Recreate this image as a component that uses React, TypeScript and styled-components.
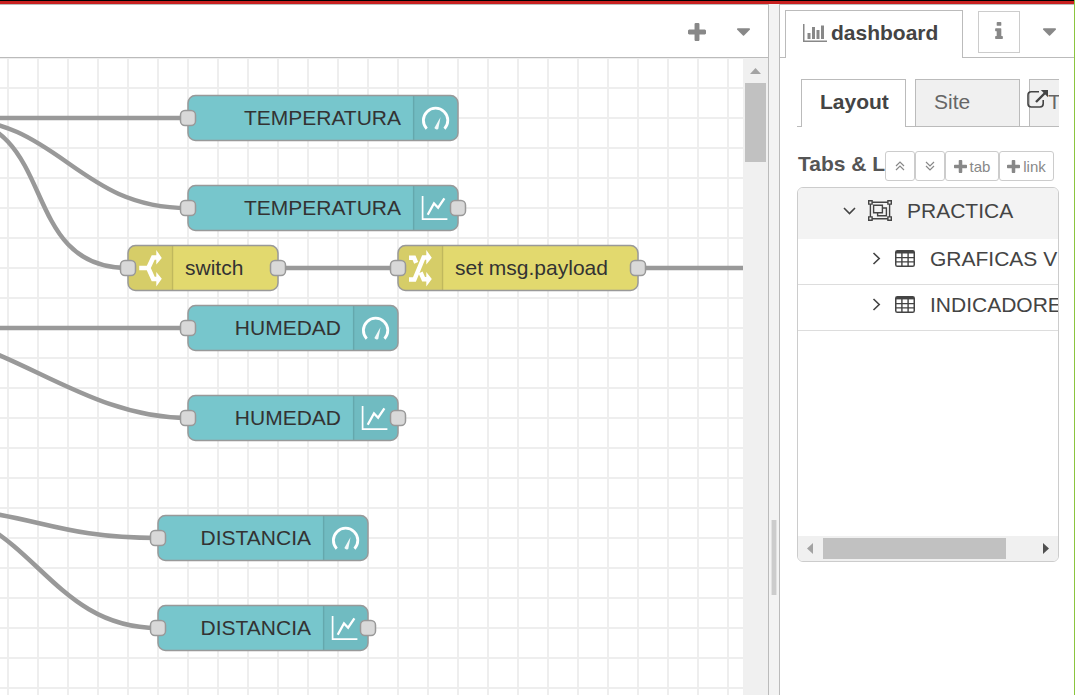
import React from 'react';
import styled, { createGlobalStyle } from 'styled-components';

const Global = createGlobalStyle`
  * { box-sizing: border-box; }
  body { margin: 0; overflow: hidden; background: #fff; }
`;

const Page = styled.div`
  width: 1075px;
  height: 695px;
  display: flex;
  flex-direction: column;
  border-right: 1px solid #8bc53f;
  font-family: 'Liberation Sans', Arial, sans-serif;
  font-size: 21px;
  color: #444;
  background: #fff;
`;
const TopBar = styled.div`
  height: 4px;
  flex: none;
  background: #c8201f;
  border-top: 1px solid #000;
`;
const Main = styled.div`
  flex: 1;
  display: flex;
  min-height: 0;
`;
const Workspace = styled.section`
  width: 769px;
  flex: none;
  display: flex;
  flex-direction: column;
  border-top: 1px solid #bbb;
  border-right: 1px solid #bbb;
`;
const WorkspaceTabs = styled.header`
  height: 53px;
  flex: none;
  display: flex;
  align-items: center;
  justify-content: flex-end;
  gap: 31px;
  padding: 2px 18px 0 0;
  border-bottom: 1px solid #bbb;
`;
const ChartRow = styled.div`
  flex: 1;
  display: flex;
  min-height: 0;
`;
const Canvas = styled.div`
  position: relative;
  width: 743px;
  flex: none;
  overflow: hidden;
  background-image: linear-gradient(#eee 2px, transparent 2px),
    linear-gradient(90deg, #eee 2px, transparent 2px);
  background-size: 30px 30px;
  background-position: 7px 29px;
`;
const Wires = styled.svg`
  position: absolute;
  left: 0;
  top: 0;
`;
const NodeBox = styled.div<{ $x: number; $y: number; $w: number; $side: 'left' | 'right' }>`
  position: absolute;
  left: ${(p) => p.$x}px;
  top: ${(p) => p.$y}px;
  width: ${(p) => p.$w}px;
  height: 46px;
  display: flex;
  align-items: center;
  justify-content: ${(p) => (p.$side === 'left' ? 'flex-start' : 'flex-end')};
  padding: ${(p) => (p.$side === 'left' ? '0 0 0 57px' : '0 57px 0 0')};
  color: #333;
`;
const NodeArt = styled.svg`
  position: absolute;
  left: 0;
  top: 0;
  overflow: visible;
`;
const NodeLabel = styled.span`
  position: relative;
  line-height: 24px;
  white-space: nowrap;
`;
const VScroll = styled.div`
  flex: 1;
  display: flex;
  flex-direction: column;
  align-items: center;
  padding-top: 10px;
  background: #f0f0f0;
`;
const VThumb = styled.div`
  width: 21px;
  height: 79px;
  margin-top: 9px;
  background: #c1c1c1;
`;
const Arrow = styled.svg`
  display: block;
  flex: none;
`;
const Splitter = styled.div`
  width: 10px;
  flex: none;
  display: flex;
  justify-content: center;
  align-items: flex-start;
  padding-top: 516px;
  background: #f3f3f3;
`;
const Grip = styled.div`
  width: 6px;
  height: 75px;
  background: #ccc;
  border: solid #e2e2e2;
  border-width: 0 1px;
`;
const Sidebar = styled.aside`
  flex: 1;
  min-width: 0;
  display: flex;
  flex-direction: column;
  border-top: 1px solid #bbb;
  border-left: 1px solid #bbb;
`;
const SidebarTabs = styled.header`
  height: 53px;
  flex: none;
  display: flex;
  align-items: flex-start;
  padding: 5px 0 0 5px;
  background: linear-gradient(#bbb, #bbb) 0 52px / 100% 1px no-repeat;
`;
const ActiveTab = styled.div`
  width: 178px;
  height: 48px;
  display: flex;
  align-items: center;
  gap: 4px;
  padding: 0 0 4px 17px;
  border: 1px solid #bbb;
  border-bottom: 0;
  background: #fff;
  font-weight: bold;
`;
const InfoButton = styled.div`
  width: 42px;
  height: 42px;
  margin: 1px 0 0 15px;
  display: flex;
  align-items: center;
  justify-content: center;
  padding-bottom: 3px;
  border: 1px solid #ccc;
`;
const MenuCaret = styled.div`
  margin: 18px 0 0 23px;
`;
const Body = styled.div`
  padding: 21px 15px 0 17px;
  display: flex;
  flex-direction: column;
`;
const SubTabs = styled.nav`
  position: relative;
  width: 262px;
  height: 48px;
  display: flex;
  gap: 9px;
  padding-left: 4px;
  overflow: hidden;
  background: linear-gradient(#bbb, #bbb) 0 47px / 100% 1px no-repeat;
`;
const SubTab = styled.div<{ $active?: boolean }>`
  width: 105px;
  height: 48px;
  flex: none;
  padding: 10px 0 0 18px;
  line-height: 24px;
  border: 1px solid #bbb;
  border-bottom: ${(p) => (p.$active ? '0' : '1px solid #bbb')};
  background: ${(p) => (p.$active ? '#fff' : '#f0f0f0')};
  color: ${(p) => (p.$active ? '#444' : '#666')};
  font-weight: ${(p) => (p.$active ? 'bold' : 'normal')};
`;
const OpenLink = styled.svg`
  position: absolute;
  left: 230px;
  top: 10px;
`;
const TitleRow = styled.div`
  height: 30px;
  margin-top: 24px;
  display: flex;
`;
const Title = styled.div`
  width: 88px;
  padding-left: 1px;
  overflow: hidden;
  white-space: nowrap;
  font-weight: bold;
  line-height: 26px;
  color: #555;
`;
const SmallButton = styled.button<{ $w: number }>`
  width: ${(p) => p.$w}px;
  height: 30px;
  flex: none;
  display: flex;
  align-items: center;
  justify-content: center;
  gap: 3px;
  padding: 0;
  border: 1px solid #ccc;
  border-radius: 3px;
  background: #fff;
  color: #888;
  font: 15px 'Liberation Sans', Arial, sans-serif;
`;
const Tree = styled.div`
  width: 262px;
  height: 375px;
  margin-top: 6px;
  display: flex;
  flex-direction: column;
  border: 1px solid #ccc;
  border-radius: 6px;
  overflow: hidden;
`;
const TreeRow = styled.div<{ $group?: boolean }>`
  height: ${(p) => (p.$group ? 51 : 46)}px;
  flex: none;
  display: flex;
  align-items: center;
  padding: ${(p) => (p.$group ? '0 0 6px 44px' : '0 0 6px 71px')};
  background: ${(p) => (p.$group ? '#f3f3f3' : '#fff')};
  border-bottom: ${(p) => (p.$group ? '0' : '1px solid #ddd')};
  white-space: nowrap;
`;
const TreeIcon = styled.svg<{ $l: number; $r: number }>`
  flex: none;
  margin: 0 ${(p) => p.$r}px 0 ${(p) => p.$l}px;
`;
const HScroll = styled.div`
  height: 25px;
  margin-top: auto;
  display: flex;
  align-items: center;
  padding: 0 9px;
  background: #f0f0f0;
`;
const HThumb = styled.div`
  width: 183px;
  height: 21px;
  flex: none;
  margin: 0 37px 0 10px;
  background: #c1c1c1;
`;

const paths = {
  plus: 'M1600 736v192q0 40-28 68t-68 28h-416v416q0 40-28 68t-68 28h-192q-40 0-68-28t-28-68v-416h-416q-40 0-68-28t-28-68v-192q0-40 28-68t68-28h416v-416q0-40 28-68t68-28h192q40 0 68 28t28 68v416h416q40 0 68 28t28 68z',
  caret: 'M1408 704q0 26-19 45l-448 448q-19 19-45 19t-45-19l-448-448q-19-19-19-45t19-45 45-19h896q26 0 45 19t19 45z',
  info: 'M1216 1344v128q0 26-19 45t-45 19h-512q-26 0-45-19t-19-45v-128q0-26 19-45t45-19h64v-384h-64q-26 0-45-19t-19-45v-128q0-26 19-45t45-19h384q26 0 45 19t19 45v576h64q26 0 45 19t19 45zm-128-1152v192q0 26-19 45t-45 19h-256q-26 0-45-19t-19-45v-192q0-26 19-45t45-19h256q26 0 45 19t19 45z',
  chart: 'M640 896v512h-256v-512h256zm384-512v1024h-256v-1024h256zm1024 1152v128h-2048v-1536h128v1408h1920zm-640-896v768h-256v-768h256zm384-384v1152h-256v-1152h256z',
};

interface GlyphProps {
  name: keyof typeof paths;
  w: number;
  h: number;
  viewBox: string;
}

const Glyph = ({ name, w, h, viewBox }: GlyphProps) => (
  <Arrow width={w} height={h} viewBox={viewBox} fill="#888">
    <path d={paths[name]} />
  </Arrow>
);

const PlusIcon = ({ size }: { size: number }) => <Glyph name="plus" w={size} h={size} viewBox="192 128 1408 1408" />;
const CaretIcon = () => <Glyph name="caret" w={13} h={8} viewBox="384 640 1024 576" />;

type IconName = 'gauge' | 'chart' | 'switch' | 'change';

const NodeIcon = ({ name }: { name: IconName }) => {
  switch (name) {
    case 'gauge':
      return (
        <g>
          <path d="M13.3 33.2A12.2 12.2 0 1 1 31.1 33.2" fill="none" stroke="#fff" strokeWidth="2.8" />
          <path d="M27.2 21.6L24.9 33.2Q22.8 35.2 21 32.6Z" fill="#fff" fillOpacity=".9" />
        </g>
      );
    case 'chart':
      return (
        <g fill="none" stroke="#fff">
          <path d="M9.2 10.5V33.7H34" strokeWidth="1.7" />
          <path d="M14.3 29.2L20.6 18L24.7 22.2L31 12.9" strokeWidth="2.3" />
        </g>
      );
    case 'switch':
      return (
        <g>
          <path d="M11.2 22.5H20.5M19.6 24L25.2 12H29M19.6 21L25.2 33.5H29" fill="none" stroke="#fff" strokeWidth="4.6" />
          <path d="M28.3 4.5L33.8 12.4L28.3 19ZM28.3 26.5L33.8 33.2L28.3 41Z" fill="#fff" />
        </g>
      );
    default:
      return (
        <g>
          <path d="M11 34H16.4L25.6 12H29M11 12.2H16L18.2 17.4M22.6 27L25.6 33.8H29" fill="none" stroke="#fff" strokeWidth="4.4" />
          <path d="M28.3 4.5L33.8 12.2L28.3 19ZM28.3 26.5L33.8 33.6L28.3 41Z" fill="#fff" />
        </g>
      );
  }
};

interface FlowNodeProps {
  x: number;
  cy: number;
  w: number;
  label: string;
  icon: IconName;
  out?: boolean;
}

const Port = ({ x }: { x: number }) => (
  <rect x={x - 7.5} y={15.5} width={15} height={15} rx={4.5} fill="#d9d9d9" stroke="#999" strokeWidth={1.5} />
);

const FlowNode = ({ x, cy, w, label, icon, out }: FlowNodeProps) => {
  const left = icon === 'switch' || icon === 'change';
  const ix = left ? 0 : w - 45;
  return (
    <NodeBox $x={x} $y={cy - 58 - 23} $w={w} $side={left ? 'left' : 'right'}>
      <NodeArt width={w} height={46}>
        <rect x={0} y={0.5} width={w} height={45} rx={7.5} fill={left ? '#e2d96e' : '#77c6cc'} />
        <path
          d={
            left
              ? 'M45 .5H7.5A7.5 7.5 0 0 0 0 8V38A7.5 7.5 0 0 0 7.5 45.5H45Z'
              : `M${ix} .5H${w - 7.5}A7.5 7.5 0 0 1 ${w} 8V38A7.5 7.5 0 0 1 ${w - 7.5} 45.5H${ix}Z`
          }
          fill="#000"
          fillOpacity={0.05}
        />
        <path d={`M${left ? 44.6 : ix + 0.6} .5V45.5`} stroke="#000" strokeOpacity={0.1} strokeWidth={1.5} />
        <g transform={`translate(${ix + (left ? 0 : 0.4)} .5)`}>
          <NodeIcon name={icon} />
        </g>
        <rect x={0} y={0.5} width={w} height={45} rx={7.5} fill="none" stroke="#999" strokeWidth={1.5} />
        <Port x={0} />
        {out && <Port x={w} />}
      </NodeArt>
      <NodeLabel>{label}</NodeLabel>
    </NodeBox>
  );
};

const nodes: FlowNodeProps[] = [
  { x: 188, cy: 118, w: 270, label: 'TEMPERATURA', icon: 'gauge' },
  { x: 188, cy: 208, w: 270, label: 'TEMPERATURA', icon: 'chart', out: true },
  { x: 128, cy: 268, w: 150, label: 'switch', icon: 'switch', out: true },
  { x: 398, cy: 268, w: 240, label: 'set msg.payload', icon: 'change', out: true },
  { x: 188, cy: 328, w: 210, label: 'HUMEDAD', icon: 'gauge' },
  { x: 188, cy: 418, w: 210, label: 'HUMEDAD', icon: 'chart', out: true },
  { x: 158, cy: 538, w: 210, label: 'DISTANCIA', icon: 'gauge' },
  { x: 158, cy: 628, w: 210, label: 'DISTANCIA', icon: 'chart', out: true },
];

const wires: [number, number, number, number][] = [
  [-52, 118, 188, 118],
  [-52, 118, 188, 208],
  [-52, 118, 128, 268],
  [278, 268, 398, 268],
  [638, 268, 900, 268],
  [-112, 328, 188, 328],
  [-112, 328, 188, 418],
  [-82, 508, 158, 538],
  [-82, 508, 158, 628],
];

const TableIcon = () => (
  <TreeIcon $l={14} $r={15} width="20" height="17" viewBox="0 0 20 17">
    <rect x=".75" y=".75" width="18.5" height="15.5" rx="1.6" fill="none" stroke="#444" strokeWidth="1.5" />
    <path d="M1 2.2H19" stroke="#444" strokeWidth="2.4" />
    <path d="M1 7.6H19M1 11.9H19M6.9 3V16M13.1 3V16" stroke="#444" strokeWidth="1.4" />
  </TreeIcon>
);

const GroupIcon = () => (
  <TreeIcon $l={12} $r={15} width="24" height="21" viewBox="0 0 24 21" fill="none" stroke="#444" strokeWidth="1.4">
    <path d="M4 2.2H20M4 18.8H20M2.4 4V17M21.6 4V17" />
    <path d="M.7 .7H4.1V4.1H.7ZM19.9 .7H23.3V4.1H19.9ZM.7 16.9H4.1V20.3H.7ZM19.9 16.9H23.3V20.3H19.9Z" />
    <path d="M5.6 5.2H14.4V12.8H5.6ZM14.4 8H18.4V15.8H9.6V12.8" />
  </TreeIcon>
);

const Chevron = ({ down }: { down?: boolean }) => (
  <TreeIcon $l={down ? 1 : 3} $r={0} width={down ? 13 : 9} height="13" fill="none" stroke="#444" strokeWidth="1.6">
    <path d={down ? 'M1 4L6.5 9.5L12 4' : 'M1.5 1L7.2 6.5L1.5 12'} />
  </TreeIcon>
);

const DoubleAngle = ({ d }: { d: string }) => (
  <svg width="10" height="10" viewBox="0 0 10 10" fill="none" stroke="#888" strokeWidth="1.2">
    <path d={d} />
  </svg>
);

export default function App() {
  return (
    <Page>
      <Global />
      <TopBar />
      <Main>
        <Workspace>
          <WorkspaceTabs>
            <PlusIcon size={18} />
            <CaretIcon />
          </WorkspaceTabs>
          <ChartRow>
            <Canvas>
              <Wires width="743" height="637" viewBox="0 58 743 637" fill="none" stroke="#999" strokeWidth="4.5">
                {wires.map(([x1, y1, x2, y2], i) => (
                  <path key={i} d={`M${x1} ${y1}C${x1 + 112.5} ${y1} ${x2 - 112.5} ${y2} ${x2} ${y2}`} />
                ))}
              </Wires>
              {nodes.map((n) => (
                <FlowNode key={`${n.x}-${n.cy}`} {...n} />
              ))}
            </Canvas>
            <VScroll>
              <Arrow width="11" height="6" viewBox="0 0 11 6" fill="#a3a3a3">
                <path d="M0 6L5.5 0L11 6Z" />
              </Arrow>
              <VThumb />
            </VScroll>
          </ChartRow>
        </Workspace>
        <Splitter>
          <Grip />
        </Splitter>
        <Sidebar>
          <SidebarTabs>
            <ActiveTab>
              <Glyph name="chart" w={24} h={18} viewBox="0 128 2048 1536" />
              dashboard
            </ActiveTab>
            <InfoButton>
              <Glyph name="info" w={8} h={17} viewBox="576 128 640 1408" />
            </InfoButton>
            <MenuCaret>
              <CaretIcon />
            </MenuCaret>
          </SidebarTabs>
          <Body>
            <SubTabs>
              <SubTab $active>Layout</SubTab>
              <SubTab>Site</SubTab>
              <SubTab>Theme</SubTab>
              <OpenLink width="22" height="20" viewBox="0 0 22 20" fill="none" stroke="#444" strokeWidth="1.6">
                <path d="M12 2.8H4.2A3.2 3.2 0 0 0 1 6V14.8A3.2 3.2 0 0 0 4.2 18H13A3.2 3.2 0 0 0 16.2 14.8V11" />
                <path d="M9 13L18 4" strokeWidth="2.4" />
                <path d="M13.8 1H21V8.2Z" fill="#444" stroke="none" />
              </OpenLink>
            </SubTabs>
            <TitleRow>
              <Title>Tabs &amp; Links</Title>
              <SmallButton $w={30}>
                <DoubleAngle d="M1 5L5 1L9 5M1 9L5 5L9 9" />
              </SmallButton>
              <SmallButton $w={30}>
                <DoubleAngle d="M1 1L5 5L9 1M1 5L5 9L9 5" />
              </SmallButton>
              <SmallButton $w={54}>
                <PlusIcon size={13} />
                tab
              </SmallButton>
              <SmallButton $w={55}>
                <PlusIcon size={13} />
                link
              </SmallButton>
            </TitleRow>
            <Tree>
              <TreeRow $group>
                <Chevron down />
                <GroupIcon />
                PRACTICA
              </TreeRow>
              {['GRAFICAS V', 'INDICADORES'].map((t) => (
                <TreeRow key={t}>
                  <Chevron />
                  <TableIcon />
                  {t}
                </TreeRow>
              ))}
              <HScroll>
                <Arrow width="6" height="11" viewBox="0 0 6 11" fill="#a3a3a3">
                  <path d="M6 0L0 5.5L6 11Z" />
                </Arrow>
                <HThumb />
                <Arrow width="6" height="11" viewBox="0 0 6 11" fill="#505050">
                  <path d="M0 0L6 5.5L0 11Z" />
                </Arrow>
              </HScroll>
            </Tree>
          </Body>
        </Sidebar>
      </Main>
    </Page>
  );
}
